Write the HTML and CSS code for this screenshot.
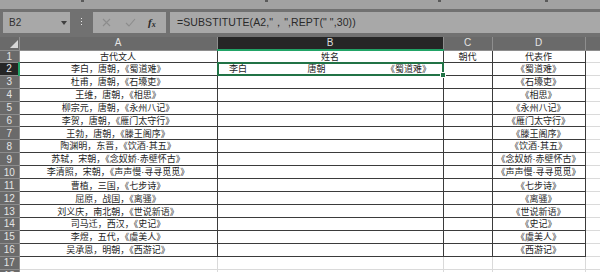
FILE: index.html
```html
<!DOCTYPE html>
<html>
<head>
<meta charset="utf-8">
<link rel="stylesheet" href="styles.css">
</head>
<body>

<div class="ribbon-edge">
  <div class="group g1"><span class="launcher"></span></div>
  <div class="group g2"><span class="launcher"></span></div>
  <div class="group g3"><span class="launcher"></span></div>
  <div class="group g4"><span class="launcher"></span></div>
</div>

<div class="formula-bar">
  <div class="name-box">
    <span>B2</span>
    <svg class="drop" width="6" height="4" viewBox="0 0 6 4"><path d="M0 0h6L3 4z" fill="#404040"/></svg>
  </div>
  <div class="grip">
    <span></span><span></span><span></span>
  </div>
  <div class="fx-box">
    <svg width="9" height="9" viewBox="0 0 9 9"><path d="M1 1l7 7M8 1L1 8" stroke="#8c8c8c" stroke-width="1.1" fill="none"/></svg>
    <svg width="11" height="9" viewBox="0 0 11 9"><path d="M1 5l3 3 6-7" stroke="#8c8c8c" stroke-width="1.1" fill="none"/></svg>
    <span class="fx">f<sub>x</sub></span>
  </div>
  <div class="formula">=SUBSTITUTE(A2,"，",REPT(" ",30))</div>
</div>

<table class="sheet">
  <colgroup>
    <col class="c-head">
    <col class="c-a">
    <col class="c-b">
    <col class="c-c">
    <col class="c-d">
    <col class="c-e">
  </colgroup>
  <thead>
    <tr>
      <th class="corner"><span class="tri"></span></th>
      <th>A</th>
      <th class="sel-col">B</th>
      <th>C</th>
      <th>D</th>
      <th></th>
    </tr>
  </thead>
  <tbody>
    <tr class="r1">
      <th>1</th>
      <td class="box">古代文人</td>
      <td class="box">姓名</td>
      <td class="box">朝代</td>
      <td class="box">代表作</td>
      <td></td>
    </tr>
    <tr>
      <th class="sel-row">2</th>
      <td class="box">李白，唐朝，《蜀道难》</td>
      <td class="box active">李白                              唐朝                              《蜀道难》<span class="cursor"><span class="handle"></span></span></td>
      <td class="box"></td>
      <td class="box">《蜀道难》</td>
      <td></td>
    </tr>
    <tr>
      <th>3</th>
      <td class="box">杜甫，唐朝，《石壕吏》</td>
      <td class="box"></td>
      <td class="box"></td>
      <td class="box">《石壕吏》</td>
      <td></td>
    </tr>
    <tr>
      <th>4</th>
      <td class="box">王维，唐朝，《相思》</td>
      <td class="box"></td>
      <td class="box"></td>
      <td class="box">《相思》</td>
      <td></td>
    </tr>
    <tr>
      <th>5</th>
      <td class="box">柳宗元，唐朝，《永州八记》</td>
      <td class="box"></td>
      <td class="box"></td>
      <td class="box">《永州八记》</td>
      <td></td>
    </tr>
    <tr>
      <th>6</th>
      <td class="box">李贺，唐朝，《雁门太守行》</td>
      <td class="box"></td>
      <td class="box"></td>
      <td class="box">《雁门太守行》</td>
      <td></td>
    </tr>
    <tr>
      <th>7</th>
      <td class="box">王勃，唐朝，《滕王阁序》</td>
      <td class="box"></td>
      <td class="box"></td>
      <td class="box">《滕王阁序》</td>
      <td></td>
    </tr>
    <tr>
      <th>8</th>
      <td class="box">陶渊明，东晋，《饮酒<span class="dot">·</span>其五》</td>
      <td class="box"></td>
      <td class="box"></td>
      <td class="box">《饮酒<span class="dot">·</span>其五》</td>
      <td></td>
    </tr>
    <tr>
      <th>9</th>
      <td class="box">苏轼，宋朝，《念奴娇<span class="dot">·</span>赤壁怀古》</td>
      <td class="box"></td>
      <td class="box"></td>
      <td class="box">《念奴娇<span class="dot">·</span>赤壁怀古》</td>
      <td></td>
    </tr>
    <tr>
      <th>10</th>
      <td class="box">李清照，宋朝，《声声慢<span class="dot">·</span>寻寻觅觅》</td>
      <td class="box"></td>
      <td class="box"></td>
      <td class="box">《声声慢<span class="dot">·</span>寻寻觅觅》</td>
      <td></td>
    </tr>
    <tr>
      <th>11</th>
      <td class="box">曹植，三国，《七步诗》</td>
      <td class="box"></td>
      <td class="box"></td>
      <td class="box">《七步诗》</td>
      <td></td>
    </tr>
    <tr>
      <th>12</th>
      <td class="box">屈原，战国，《离骚》</td>
      <td class="box"></td>
      <td class="box"></td>
      <td class="box">《离骚》</td>
      <td></td>
    </tr>
    <tr>
      <th>13</th>
      <td class="box">刘义庆，南北朝，《世说新语》</td>
      <td class="box"></td>
      <td class="box"></td>
      <td class="box">《世说新语》</td>
      <td></td>
    </tr>
    <tr>
      <th>14</th>
      <td class="box">司马迁，西汉，《史记》</td>
      <td class="box"></td>
      <td class="box"></td>
      <td class="box">《史记》</td>
      <td></td>
    </tr>
    <tr>
      <th>15</th>
      <td class="box">李煜，五代，《虞美人》</td>
      <td class="box"></td>
      <td class="box"></td>
      <td class="box">《虞美人》</td>
      <td></td>
    </tr>
    <tr>
      <th>16</th>
      <td class="box">吴承恩，明朝，《西游记》</td>
      <td class="box"></td>
      <td class="box"></td>
      <td class="box">《西游记》</td>
      <td></td>
    </tr>
    <tr>
      <th>17</th>
      <td></td>
      <td></td>
      <td></td>
      <td></td>
      <td></td>
    </tr>
    <tr>
      <th>18</th>
      <td></td>
      <td></td>
      <td></td>
      <td></td>
      <td></td>
    </tr>
  </tbody>
</table>

</body>
</html>
```

FILE: styles.css
```css
body {
  margin: 0;
  width: 600px;
  height: 272px;
  overflow: hidden;
  background: #ffffff;
  font-family: "Noto Sans CJK SC", sans-serif;
}

/* bottom edge of the ribbon */
.ribbon-edge {
  display: flex;
  height: 9px;
  background: #a2a2a2;
  border-bottom: 2px solid #717171;
}

.group {
  display: flex;
  justify-content: flex-end;
}

.g1 { width: 86px; }
.g2 { width: 184px; }
.g3 { width: 173px; }
.g4 { width: 107px; }

.launcher {
  width: 3px;
  height: 2px;
  margin-right: 2px;
  background: #5a5a5a;
}

/* formula bar */
.formula-bar {
  display: flex;
  align-items: flex-start;
  height: 26px;
  padding-top: 1px;
  background: #717171;
  font-family: "Liberation Sans", Arial, sans-serif;
  font-size: 10px;
  color: #303030;
  box-sizing: border-box;
}

.name-box {
  display: flex;
  align-items: center;
  justify-content: space-between;
  width: 67px;
  height: 21px;
  margin-left: 3px;
  padding: 0 3px 0 6px;
  box-sizing: border-box;
  background: #a8a8a8;
}

.grip {
  display: flex;
  flex-direction: column;
  gap: 2px;
  width: 23px;
  height: 21px;
  padding-top: 6px;
  box-sizing: border-box;
  align-items: center;
}

.grip span {
  width: 1px;
  height: 1px;
  background: #e8e8e8;
}

.fx-box {
  display: flex;
  align-items: center;
  width: 73px;
  height: 21px;
  padding-left: 9px;
  gap: 14px;
  box-sizing: border-box;
  background: #a8a8a8;
}

.fx {
  font-family: "Liberation Serif", serif;
  font-style: italic;
  font-weight: bold;
  font-size: 11px;
  color: #2a2a2a;
  margin-left: -2px;
}

.fx sub {
  font-size: 8px;
  vertical-align: -1px;
}

.formula {
  flex: 1;
  height: 21px;
  margin-left: 4px;
  padding-left: 7px;
  line-height: 21px;
  white-space: pre;
  background: #a8a8a8;
  font-size: 10.5px;
  letter-spacing: 0.1px;
  color: #2a2a2a;
}

/* sheet grid */
.sheet {
  table-layout: fixed;
  border-collapse: collapse;
  width: 600px;
}

.c-head { width: 19px; }
.c-a { width: 198px; }
.c-b { width: 226px; }
.c-c { width: 49px; }
.c-d { width: 93px; }
.c-e { width: 15px; }

thead th {
  height: 12px;
  padding: 0;
  background: #6a6a6a;
  color: #e4e4e4;
  font-family: "Liberation Sans", Arial, sans-serif;
  font-weight: normal;
  font-size: 10px;
  line-height: 12px;
  border-left: 1px solid #8e8e8e;
  border-bottom: 1px solid #8e8e8e;
}

thead th.corner {
  position: relative;
  border-left: none;
}

.tri {
  position: absolute;
  right: 1px;
  bottom: 2px;
  width: 0;
  height: 0;
  border-left: 8px solid transparent;
  border-bottom: 8px solid #d6d6d6;
}

thead th.sel-col {
  background: #262626;
  color: #dcdcdc;
  border-bottom: 2px solid #21a366;
}

tbody th {
  padding: 0;
  background: #6a6a6a;
  color: #e4e4e4;
  font-family: "Liberation Sans", Arial, sans-serif;
  font-weight: normal;
  font-size: 10px;
  line-height: 11px;
  border-bottom: 1px solid #8e8e8e;
  border-right: 1px solid #8e8e8e;
}

tbody th.sel-row {
  background: #262626;
  border-right: 2px solid #21a366;
}

tbody tr {
  height: 12.9px;
}

tbody tr.r1 {
  height: 12px;
}

td {
  padding: 0;
  border: 1px solid #dadada;
  font-size: 9px;
  line-height: 11px;
  color: #1e1e1e;
  text-align: center;
  white-space: pre;
  overflow: visible;
}

td.box {
  border: 1px solid #3b3b3b;
}

.dot {
  font-family: "Liberation Sans", Arial, sans-serif;
}

td.active {
  position: relative;
}

.cursor {
  position: absolute;
  left: -1px;
  top: -1px;
  right: -1px;
  bottom: -1px;
  border: 2px solid #217346;
}

.handle {
  position: absolute;
  right: -4px;
  bottom: -4px;
  width: 4px;
  height: 4px;
  background: #217346;
  border: 1px solid #ffffff;
}
```
